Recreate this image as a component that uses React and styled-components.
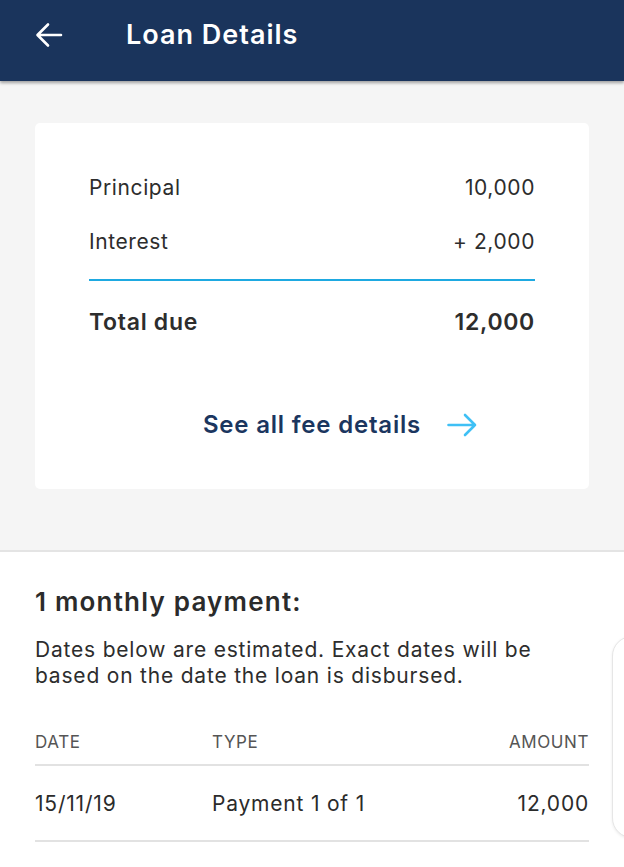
import React from "react";
import styled, { createGlobalStyle } from "styled-components";

const GlobalStyle = createGlobalStyle`
  body {
    margin: 0;
    font-family: Inter, "Open Sans", sans-serif;
    background: #ffffff;
    color: #2b2b2b;
  }
`;

const Page = styled.div`
  position: relative;
  width: 624px;
  height: 867px;
  overflow: hidden;
  background: #ffffff;
`;

const Header = styled.header`
  height: 81px;
  background: #1a345c;
  display: flex;
  align-items: center;
  padding: 0 0 12px 34px;
  box-sizing: border-box;
  box-shadow: 0 2px 3px rgba(0, 0, 0, 0.35);
  position: relative;
  z-index: 2;
`;

const BackButton = styled.button`
  border: 0;
  background: none;
  padding: 0;
  width: 30px;
  height: 30px;
  display: flex;
  align-items: center;
  justify-content: center;
  margin-right: 62px;
`;

const Title = styled.h1`
  margin: 0;
  color: #ffffff;
  font-size: 27px;
  font-weight: 600;
  letter-spacing: 1px;
`;

const Summary = styled.section`
  background: #f5f5f5;
  padding: 42px 35px 61px;
  border-bottom: 2px solid #e4e4e4;
`;

const Card = styled.div`
  background: #ffffff;
  border-radius: 5px;
  padding: 48px 54px 50px;
  display: flex;
  flex-direction: column;
`;

const Row = styled.div`
  display: flex;
  justify-content: space-between;
  align-items: center;
  height: 32px;
  margin-bottom: ${(p) => p.$gap || 0}px;
  font-size: ${(p) => (p.$total ? 23 : 21)}px;
  font-weight: ${(p) => (p.$total ? 600 : 400)};
  letter-spacing: ${(p) => (p.$total ? 0.7 : 0.6)}px;
  color: #2d2d2d;
`;

const Divider = styled.div`
  height: 2px;
  background: #1ea9e1;
  margin: 22px 0 25px;
`;

const FeeLink = styled.a`
  display: flex;
  align-items: center;
  justify-content: center;
  gap: 26px;
  margin-top: 72px;
  padding-left: 56px;
  color: #1b365f;
  font-size: 24px;
  font-weight: 600;
  letter-spacing: 0.8px;
  text-decoration: none;
`;

const Schedule = styled.section`
  padding: 34px 35px 0;
`;

const Heading = styled.h2`
  margin: 0 0 20px;
  font-size: 26px;
  font-weight: 600;
  letter-spacing: 1.2px;
  color: #2b2b2b;
`;

const Note = styled.p`
  margin: 0 0 36px;
  font-size: 21px;
  line-height: 26px;
  letter-spacing: 0.8px;
  color: #2d2d2d;
`;

const Table = styled.div`
  display: grid;
  grid-template-columns: 177px 1fr auto;
`;

const Cell = styled.div`
  display: flex;
  align-items: center;
  justify-content: ${(p) => (p.$right ? "flex-end" : "flex-start")};
  border-bottom: 2px solid #e2e2e2;
  height: ${(p) => (p.$head ? 34 : 74)}px;
  padding-bottom: ${(p) => (p.$head ? 5 : 0)}px;
  font-size: ${(p) => (p.$head ? 17 : 21)}px;
  letter-spacing: ${(p) => (p.$head ? 0.6 : 0.8)}px;
  color: ${(p) => (p.$head ? "#555555" : "#2b2b2b")};
  text-transform: ${(p) => (p.$head ? "uppercase" : "none")};
`;

const SidePeek = styled.div`
  position: absolute;
  left: 612px;
  top: 636px;
  width: 60px;
  height: 200px;
  border-radius: 20px;
  border: 1px solid #e6e6e6;
  background: #ffffff;
  box-shadow: 0 1px 3px rgba(0, 0, 0, 0.08);
`;

const ArrowLeft = () => (
  <svg width="28" height="28" viewBox="0 0 28 28" fill="none">
    <path
      d="M26 14H3M13 3.5L2.5 14 13 24.5"
      stroke="#ffffff"
      strokeWidth="2.6"
      strokeLinecap="round"
      strokeLinejoin="round"
    />
  </svg>
);

const ArrowRight = () => (
  <svg width="30" height="24" viewBox="0 0 30 24" fill="none">
    <path
      d="M1.5 12H28M18 2L28 12 18 22"
      stroke="#3fc0f5"
      strokeWidth="2.6"
      strokeLinecap="round"
      strokeLinejoin="round"
    />
  </svg>
);

const payments = [{ date: "15/11/19", type: "Payment 1 of 1", amount: "12,000" }];

export default function App() {
  return (
    <>
      <GlobalStyle />
      <Page>
        <Header>
          <BackButton aria-label="Back">
            <ArrowLeft />
          </BackButton>
          <Title>Loan Details</Title>
        </Header>

        <Summary>
          <Card>
            <Row $gap={22}>
              <span>Principal</span>
              <span>10,000</span>
            </Row>
            <Row>
              <span>Interest</span>
              <span>+ 2,000</span>
            </Row>
            <Divider />
            <Row $total>
              <span>Total due</span>
              <span>12,000</span>
            </Row>
            <FeeLink href="#">
              See all fee details
              <ArrowRight />
            </FeeLink>
          </Card>
        </Summary>

        <Schedule>
          <Heading>1 monthly payment:</Heading>
          <Note>
            Dates below are estimated. Exact dates will be
            <br />
            based on the date the loan is disbursed.
          </Note>
          <Table>
            <Cell $head>Date</Cell>
            <Cell $head>Type</Cell>
            <Cell $head $right>Amount</Cell>
            {payments.map((p) => (
              <React.Fragment key={p.date}>
                <Cell>{p.date}</Cell>
                <Cell>{p.type}</Cell>
                <Cell $right>{p.amount}</Cell>
              </React.Fragment>
            ))}
          </Table>
        </Schedule>

        <SidePeek />
      </Page>
    </>
  );
}
